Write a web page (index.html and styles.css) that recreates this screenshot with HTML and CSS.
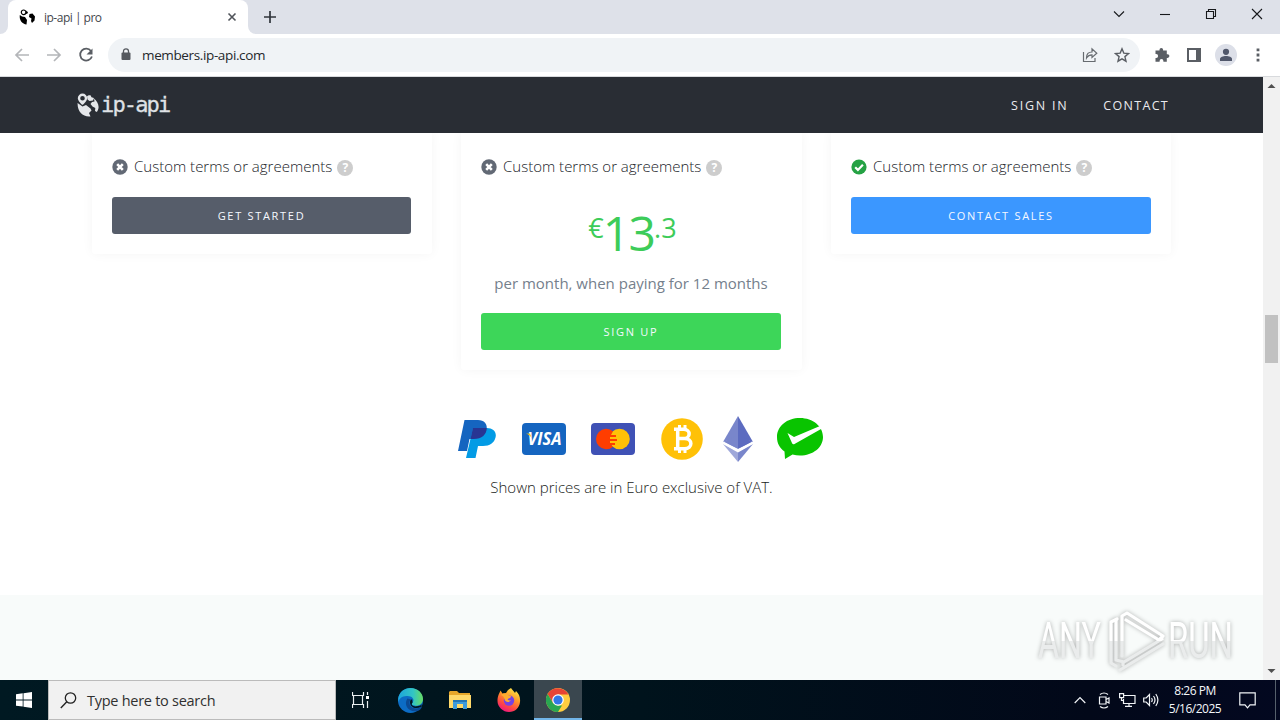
FILE: index.html
```html
<!DOCTYPE html>
<html lang="en">
<head>
<meta charset="utf-8">
<title>ip-api | pro</title>
<link rel="stylesheet" href="styles.css">
</head>
<body>
<svg width="0" height="0" class="defs">
  <symbol id="globe" viewBox="0 0 22 24">
    <path d="M10 3.500c.5-1 2-1.500 3.500-1.300l1 2 2.500.8-1 2.500-3.500.5-2-1.500z"/>
    <path d="M17 5.500c2.500 2 4.500 5 4.600 8.500-.1 2-.8 3.800-1.800 5l-1.800-1 .3-3-2.800-1.500-2-2.500 1.500-2 2.500-.5z"/>
    <path d="M.6 10 5.500 13.500l3.500-1.500 4.500 3.500 1 2-2.500 2.500 1.500 3.500C6 24.300.2 19 .6 10z"/>
    <path fill-rule="evenodd" d="M5.500.5A4.700 4.700 0 0 0 .8 5.200C.8 8 5.500 12 5.500 12s4.700-4 4.700-6.800A4.700 4.700 0 0 0 5.500.5zm0 2.400a2.300 2.300 0 1 1 0 4.600 2.300 2.300 0 0 1 0-4.600z"/>
  </symbol>
  <symbol id="globe-small" viewBox="0 0 17 16">
    <circle cx="4.600" cy="3.300" r="2.300" fill="none" stroke="#000" stroke-width="1.200"/>
    <path d="M7.500 1.500 9 3.500 8 5l-1.500-.5zM.8 6 3 7.500l3 .5 2 3-.5 4.500C3.500 15 0 11.500.8 6zM10.500 5l3-.5 2.500 3-.5 4-2.500 2.500-1-2 .5-2.500-2.500-1.500z"/>
  </symbol>
  <symbol id="cross" viewBox="0 0 16 16"><circle cx="8" cy="8" r="7.700" fill="#626975"/><path d="m5.200 5.200 5.600 5.600m0-5.600-5.600 5.600" stroke="#fff" stroke-width="2.600"/></symbol>
  <symbol id="check" viewBox="0 0 16 16"><circle cx="8" cy="8" r="7.600" fill="#25a244"/><path d="m4.200 8.200 2.700 2.700 5-5.200" fill="none" stroke="#fff" stroke-width="2.200"/></symbol>
</svg>

<header class="tabstrip">
  <div class="edge"></div>
  <div class="tab">
    <svg class="favicon" width="17" height="16"><use href="#globe-small"/></svg>
    <span class="tab-title">ip-api | pro</span>
    <svg class="tab-close" width="10" height="10" viewBox="0 0 10 10"><path d="m1.500 1.500 7 7m0-7-7 7" stroke="#50545a" stroke-width="1.600"/></svg>
  </div>
  <div class="newtab"><svg width="14" height="14" viewBox="0 0 14 14"><path d="M7 1v12M1 7h12" stroke="#30343b" stroke-width="1.700"/></svg></div>
  <div class="winctl">
    <svg width="12" height="12" viewBox="0 0 12 12"><path d="m1 3.500 5 5 5-5"/></svg>
    <svg width="12" height="12" viewBox="0 0 12 12"><path d="M1 6.500h10"/></svg>
    <svg width="12" height="12" viewBox="0 0 12 12"><path d="M1.500 3.500h7v7h-7zM3.500 3.500v-2h7v7h-2"/></svg>
    <svg width="12" height="12" viewBox="0 0 12 12"><path d="m1 1 10 10M11 1 1 11"/></svg>
  </div>
</header>

<div class="toolbar">
  <div class="navbtns">
    <svg width="16" height="16" viewBox="0 0 16 16"><path d="M15 8H2m6-6L2 8l6 6" fill="none" stroke="#b4b6b9" stroke-width="1.700"/></svg>
    <svg width="16" height="16" viewBox="0 0 16 16"><path d="M1 8h13M8 2l6 6-6 6" fill="none" stroke="#b4b6b9" stroke-width="1.700"/></svg>
    <svg width="16" height="16" viewBox="0 0 16 16"><path d="M13 4A6 6 0 1 0 13.900 9.500" fill="none" stroke="#5a5e64" stroke-width="1.800"/><path d="M14.500 1.500v6H8.500z" fill="#5a5e64"/></svg>
  </div>
  <div class="omnibox">
    <svg width="10" height="13" viewBox="0 0 10 13"><rect x=".5" y="4.500" width="9" height="7.500" rx="1" fill="#55595f"/><path d="M2.500 5V3.300a2.500 2.500 0 0 1 5 0V5" fill="none" stroke="#55595f" stroke-width="1.300"/></svg>
    <span class="url">members.ip-api.com</span>
    <svg class="share" width="16" height="16" viewBox="0 0 16 16"><path d="M1.500 5v9.500H13V11M4.500 11C4.500 7 6.500 5 10 5V1.800L14.800 6.300 10 10.500V7.800C7.500 7.800 6 8.500 4.500 11z" fill="none" stroke="#676b70" stroke-width="1.200"/></svg>
    <svg class="star" width="16" height="16" viewBox="0 0 16 16"><path d="m8 1.800 1.800 4.300 4.700.4-3.600 3.100 1.100 4.600L8 11.800l-4 2.400 1.100-4.600-3.600-3.100 4.700-.4z" fill="none" stroke="#5a5e64" stroke-width="1.400"/></svg>
  </div>
  <div class="actions">
    <svg width="16" height="16" viewBox="0 0 16 16"><path fill="#5a5e64" d="M1.500 3.500h4V2.800a1.800 1.800 0 0 1 3.600 0v.7h3.700v3.800h.8a1.800 1.800 0 0 1 0 3.600h-.8v3.800H9.400V14a1.800 1.800 0 0 0-3.800 0v.7H1.500v-3.800h.7a1.900 1.900 0 0 0 0-3.800h-.7z"/></svg>
    <svg width="16" height="16" viewBox="0 0 16 16"><path fill="#5a5e64" fill-rule="evenodd" d="M1 1h14v14H1zm2 2v10h7V3z"/></svg>
    <svg width="22" height="22" viewBox="0 0 22 22"><circle cx="11" cy="11" r="11" fill="#dcdfe8"/><circle cx="11" cy="7.800" r="3.100" fill="#50576b"/><path d="M5 17v-2c0-2 3-3 6-3s6 1 6 3v2z" fill="#50576b"/></svg>
    <svg width="4" height="16" viewBox="0 0 4 16"><path fill="#5a5e64" d="M.6 1.500h2.800v2.800H.6zM.6 6.600h2.800v2.800H.6zM.6 11.700h2.800v2.800H.6z"/></svg>
  </div>
</div>

<div class="viewport">
  <main class="page">
    <nav class="sitenav">
      <svg class="logo" width="22" height="24"><use href="#globe"/></svg>
      <span class="brand">ip-api</span>
      <a class="signin">SIGN IN</a>
      <a class="contact">CONTACT</a>
    </nav>
    <section class="plans">
      <article class="card">
        <div class="feature"><svg width="16" height="16"><use href="#cross"/></svg><span>Custom terms or agreements</span><i class="help">?</i></div>
        <a class="btn dark"><span>GET STARTED</span></a>
      </article>
      <article class="card">
        <div class="feature"><svg width="16" height="16"><use href="#cross"/></svg><span>Custom terms or agreements</span><i class="help">?</i></div>
        <div class="price"><span class="small">€</span><span class="big">13</span><span class="small">.3</span></div>
        <p class="period">per month, when paying for 12 months</p>
        <a class="btn green"><span>SIGN UP</span></a>
      </article>
      <article class="card">
        <div class="feature"><svg width="16" height="16"><use href="#check"/></svg><span>Custom terms or agreements</span><i class="help">?</i></div>
        <a class="btn blue"><span>CONTACT SALES</span></a>
      </article>
    </section>
    <section class="payments">
      <svg class="pp" width="38" height="38" viewBox="0 0 38 38"><path fill="#1565c0" d="M6.500 0H20c6 0 10 4 8.500 10-1.500 6-6 9-13 9h-4L9 31H0z"/><path fill="#039be5" d="M15 8h14c6 0 10 4 8.500 9.500C36 23 32 26 25 26h-5l-2.500 12H8z"/><path fill="#283593" d="M15 8h13.800c-.2 6.500-5 11-13 11h-3.300z"/></svg>
      <svg class="visa" width="44" height="32" viewBox="0 0 44 32"><rect width="44" height="32" rx="4" fill="#1565c0"/><text x="5.500" y="22" textLength="34" lengthAdjust="spacingAndGlyphs" class="visa-text">VISA</text><path d="m4 10.500 4 .3 1.500 4C8 12.500 6.500 11.500 4 10.500z" fill="#ffc107"/></svg>
      <svg class="mc" width="44" height="32" viewBox="0 0 44 32"><rect width="44" height="32" rx="4" fill="#3f51b5"/><circle cx="28.500" cy="16" r="10.300" fill="#ffc107"/><path fill="#ff3d00" d="M22 8.200A10.300 10.300 0 1 0 22 23.800l-2-1.800h4v-2h-5v-2h7v-2h-7v-2h6v-2h-5z"/></svg>
      <svg class="btc" width="42" height="42" viewBox="0 0 42 42"><circle cx="21" cy="21" r="20.800" fill="#ffc107"/><path d="M13 11.300h9.500c7.500 0 7.500 9.200 0 9.200H17m-4 10.200h10.500c8.500 0 8.500-10.200 0-10.200M16.700 11v20" fill="none" stroke="#fff" stroke-width="3.500"/><path d="M18.500 7v5m5.500-5v5m-5.500 18v5m5.500-5v5" stroke="#fff" stroke-width="3"/></svg>
      <svg class="eth" width="30" height="46" viewBox="0 0 30 46"><path fill="#7986cb" d="M15 0 0 26l15-5z"/><path fill="#5c6bc0" d="m15 0 15 26-15-5z"/><path fill="#7986cb" d="m0 26 15-7v14z"/><path fill="#5c6bc0" d="m30 26-15-7v14z"/><path fill="#9fa8da" d="m0 28 15 8.500V46z"/><path fill="#7986cb" d="m30 28-15 8.500V46z"/><path fill="none" stroke="#fff" stroke-width="2" d="m0 26.500 15 8 15-8"/></svg>
      <svg class="wechat" width="47" height="42" viewBox="0 0 47 42"><path fill="#09c400" d="M23 0C10 0 0 8 0 19c0 7 3 11 7.500 14.500L8 41l7.500-4.500c2.500.7 5 1 7.500 1 13 0 23-8 23-18.500S36 0 23 0z"/><path fill="#fff" d="m10.500 15 6.500 4L43 8l1.500 2.800L17.500 26c-1 .5-2 .2-2.400-.7z"/></svg>
    </section>
    <p class="vat"><span>Shown prices are in Euro exclusive of VAT.</span></p>
    <footer class="band"></footer>
    <svg class="watermark" width="226" height="72" viewBox="0 0 226 72">
      <defs><linearGradient id="wm" gradientUnits="userSpaceOnUse" x1="0" y1="0" x2="0" y2="72"><stop offset=".49" stop-color="#fff"/><stop offset=".49" stop-color="#eaecec"/></linearGradient></defs>
      <text x="3" y="52" textLength="63" lengthAdjust="spacingAndGlyphs">ANY</text>
      <g fill="none" stroke="url(#wm)" stroke-width="3.200" stroke-linejoin="round" stroke-linecap="round"><path d="M82 13 76 16v41l5 3"/><path d="M87 50V10l5-3 36 23-4 4-33-20M81 14v40l8 2 38-23M85 64l43-26M88 59v-3"/></g>
      <text x="133" y="52" textLength="65" lengthAdjust="spacingAndGlyphs">RUN</text>
    </svg>
  </main>
  <aside class="scrollbar">
    <svg width="9" height="6" viewBox="0 0 9 6"><path d="m.5 5 4-4 4 4z" fill="#505050"/></svg>
    <div class="thumb"></div>
    <svg class="down" width="9" height="6" viewBox="0 0 9 6"><path d="m.5 1 4 4 4-4z" fill="#505050"/></svg>
  </aside>
</div>

<footer class="taskbar">
  <div class="start"><svg width="16" height="16" viewBox="0 0 16 16"><path fill="#fff" d="M0 2.200 6.700 1.300v6.200H0zM7.500 1.200 16 0v7.500H7.500zM0 8.400h6.700v6.200L0 13.700zM7.500 8.400H16V16l-8.500-1.200z"/></svg></div>
  <div class="search"><svg width="17" height="17" viewBox="0 0 17 17"><circle cx="10.500" cy="6" r="5.200" fill="none" stroke="#222" stroke-width="1.300"/><path d="M6.800 9.800.8 16" stroke="#222" stroke-width="1.400"/></svg><span>Type here to search</span></div>
  <div class="app"><svg width="17" height="16" viewBox="0 0 17 16"><path d="M.5 0v3.500h11V0M.5 16v-3.500h11V16M1.500 3.500v9m9-9v9M15.500 0v3m0 6v7" fill="none" stroke="#e9eef0" stroke-width="1.200"/><path fill="#fff" d="M14 4h3v3h-3z"/></svg></div>
  <div class="app"><svg width="25" height="25" viewBox="0 0 24 24">
    <defs><linearGradient id="eg"><stop stop-color="#1ca5dc"/><stop offset=".6" stop-color="#32c5c4"/><stop offset="1" stop-color="#68dc62"/></linearGradient></defs>
    <circle cx="12" cy="12" r="12" fill="#0c6cc5"/><path d="M.2 10C1 4 6 0 12 0c7 0 12 5 12 10.500 0 4-3 6.500-7 6.500-3 0-4.500-1-3-3 3-4-2-7-6-6.300C4 8 1 10 .2 14z" fill="url(#eg)"/><path d="M9 10c-4 6 1 14 10 12 2-.6 3.500-2.500 4-4-5 3-12 2-12-4 0-1.500.7-2.300 1.700-3z" fill="#0b4a94"/><path d="M14 14c-2 2-.2 4 4 3.600 2-.2 4-.9 5-2l-.8 2.500C17 21 11 18.500 11.600 13c.2-1.500 1-2 2-2z" fill="#02161f"/></svg></div>
  <div class="app"><svg width="22" height="20" viewBox="0 0 22 20"><path fill="#e7a72a" d="M0 2 1 1h7l2 2h11v5H0z"/><path fill="#ffd96a" d="M0 5h22v13H0z"/><path fill="#3e9bdc" d="M4 10h14v9h-4v-5H8v5H4z"/><path fill="#2375b6" d="M4 10h14v2H4z"/></svg></div>
  <div class="app"><svg width="24" height="24" viewBox="0 0 24 24">
    <defs><linearGradient id="ff" x1=".8" y1="0" x2=".3" y2="1"><stop stop-color="#fff04c"/><stop offset=".4" stop-color="#ff9a29"/><stop offset=".72" stop-color="#ff4a42"/><stop offset="1" stop-color="#ee1483"/></linearGradient></defs>
    <path fill="url(#ff)" d="M14 0c1 2 3 3 4 5l1-2c3 3 4.500 6 4 11-.6 6-5 10-11 10S.5 19 .5 13C.5 8 2 6 3.500 2.500l2 3L9 5l2-3z"/><circle cx="12" cy="12.500" r="5.200" fill="#7542e5"/><path fill="#ffac2f" d="M4 7c2-2 5-2 7 0l3 1c0 2-2 2-3 3s1 2 3 1c-2 3-5 2-6 .5C7 10 7 8 4 7z"/></svg></div>
  <div class="app active"><svg width="24" height="24" viewBox="0 0 24 24"><circle cx="12" cy="12" r="12" fill="#ffcd40"/><path fill="#e84435" d="M1.600 6A12 12 0 0 1 22.400 6.500H12L7 15z"/><path fill="#29a651" d="M1.600 6 7 15l5 2.500h4L12 24A12 12 0 0 1 1.600 6z"/><circle cx="12" cy="12" r="5.800" fill="#fff"/><circle cx="12" cy="12" r="4.600" fill="#3277e6"/></svg></div>
  <div class="tray">
    <svg width="12" height="8" viewBox="0 0 12 8"><path d="m.7 7 5.300-5.500L11.300 7"/></svg>
    <svg width="12" height="17" viewBox="0 0 12 17"><path d="M1.500 5h6.500v7H1.500zM8 7.500l3-1.500v5L8 9.500M2 2.500q4-3 8 0M2 14.500q4 3 8 0"/></svg>
    <svg width="17" height="14" viewBox="0 0 17 14"><path d="M5 2.500h11v8H4.500V6M.6.6h4v4h-4zM2.500 4.500v3h2M10 10.500v3M6 13.400h7"/></svg>
    <svg width="17" height="14" viewBox="0 0 17 14"><path d="M.7 5h2.500L6.500 1.500v11L3.200 9H.7zM8.500 5q1.500 2 0 4m2-6q3 4 0 8m2.300-10q4.200 6 0 12"/></svg>
    <div class="clock"><span class="time">8:26 PM</span><span class="date">5/16/2025</span></div>
    <svg class="note" width="17" height="17" viewBox="0 0 17 17"><path d="M.8.8h15.400v12H11l-2.500 3-2.500-3H.8z"/></svg>
    <div class="peek"></div>
  </div>
</footer>
</body>
</html>
```
FILE: styles.css
```css
* { box-sizing: border-box; }
body { margin: 0; width: 1280px; height: 720px; overflow: hidden; display: flex; flex-direction: column; background: #fff; font-family: "Open Sans", "Noto Sans", sans-serif; }
svg { display: block; flex: none; }
span, a { white-space: nowrap; }
.defs { position: absolute; }

.tabstrip { height: 34px; flex: none; display: flex; background: #dee1e9; }
.edge { width: 8px; background: #fff; }
.edge::before { content: ""; display: block; height: 34px; background: #dee1e9; border-bottom-right-radius: 8px; }
.tab { width: 240px; display: flex; align-items: center; padding: 0 11px 0 11px; background: #fff; border-radius: 8px 8px 0 0; }
.favicon { fill: #000; }
.tab-title { margin-left: 8px; font-size: 12px; letter-spacing: -.5px; color: #44474c; }
.tab-close { margin-left: auto; }
.newtab { width: 100px; background: #fff; }
.newtab svg { box-sizing: content-box; padding: 10px 71px 10px 15px; background: #dee1e9; border-bottom-left-radius: 8px; }
.winctl { margin-left: auto; padding: 8px 17px 0 0; display: flex; gap: 34px; }
.winctl path { fill: none; stroke: #16181b; stroke-width: 1.100; }

.toolbar { height: 43px; flex: none; display: flex; align-items: center; padding: 0 20px 1px 14px; border-bottom: 1px solid #d8dadd; }
.navbtns { display: flex; gap: 16px; }
.omnibox { width: 1032px; height: 34px; margin-left: 14px; padding: 0 10px 0 13px; display: flex; align-items: center; border-radius: 17px; background: #f0f3f6; }
.url { margin-left: 11px; font-size: 13.500px; letter-spacing: -.37px; color: #25282c; }
.share { margin-left: auto; }
.star { margin-left: 16px; }
.actions { margin-left: 14px; display: flex; align-items: center; gap: 16px; }
.actions svg:nth-child(3) { margin-left: -3px; }
.actions svg:nth-child(4) { margin-left: 3px; }

.viewport { height: 603px; flex: none; display: flex; }
.page { width: 1263px; display: flex; flex-direction: column; position: relative; overflow: hidden; }
.sitenav { height: 56px; flex: none; display: flex; align-items: center; padding: 0 94px 0 77px; background: #292d34; color: #e9eaee; position: relative; z-index: 1; }
.logo { fill: #e4e6e9; }
.brand { margin-left: 2px; font: 22px/30px "DejaVu Sans Mono", monospace; letter-spacing: -1.850px; color: #dfe1e5; -webkit-text-stroke: .3px #dfe1e5; }
.signin, .contact { font-size: 12.500px; letter-spacing: 1.300px; }
.signin { margin-left: auto; letter-spacing: 1.750px; }
.contact { margin-left: 35px; }

.plans { height: 239px; flex: none; display: grid; grid-template-columns: 340px 341px 340px; column-gap: 29px; padding-left: 92px; align-items: start; }
.card { padding: 22px 20px 20px; margin-top: -1px; background: #fff; box-shadow: 0 0 12px rgba(0, 0, 0, .045); border-radius: 0 0 3px 3px; }
.card:nth-child(1) { padding-right: 21px; }
.card:nth-child(2) { padding-right: 21px; }
.feature { height: 24px; display: flex; align-items: center; font-size: 15px; font-weight: 300; color: #202328; }
.feature span { margin-left: 6px; }
.feature svg { margin-top: 1px; }
.help { width: 16px; height: 16px; margin: 3px 0 0 5px; border-radius: 50%; background: #cdcdcd; color: #fff; font: bold 12px/16px "Open Sans", sans-serif; text-align: center; }
.btn { height: 37px; margin-top: 19px; display: flex; align-items: center; justify-content: center; border-radius: 3px; color: #f5f8ff; font-size: 11px; letter-spacing: 1.700px; }
.dark { background: #565d6a; }
.green { background: #3dd659; }
.blue { background: #3b97ff; }
.price { height: 62px; margin-top: 24px; display: flex; justify-content: center; color: #3dcc59; padding-left: 3px; }
.price .small { font-size: 27px; line-height: 51px; }
.price .big { font-size: 48px; line-height: 61px; letter-spacing: -1.800px; margin-left: -1px; }
.period { margin: 7px 0 0; font-size: 15px; line-height: 24px; text-align: center; color: #75808c; }
.period + .btn { margin-top: 18px; }

.payments { flex: none; display: flex; align-items: center; padding-left: 458px; padding-top: 41px; height: 92px; }
.visa { margin-left: 26px; }
.mc { margin-left: 25px; }
.btc { margin-left: 26px; }
.eth { margin-left: 20px; }
.wechat { margin-left: 24px; }
.visa-text { font: italic bold 17px "Open Sans", sans-serif; fill: #fff; }
.vat { margin: 11px 0 0; font-size: 15px; line-height: 24px; font-weight: 300; text-align: center; color: #191c20; }
.band { margin-top: auto; height: 85px; background: #f8fbfa; }
.watermark { position: absolute; left: 1035px; top: 529px; filter: drop-shadow(0 0 2px rgba(0, 0, 0, .3)); }
.watermark text { font: 50px "Roboto", sans-serif; fill: url(#wm); }

.scrollbar { width: 17px; display: flex; flex-direction: column; align-items: center; padding: 6px 0; background: #f1f1f1; }
.thumb { width: 13px; height: 48px; margin-top: 226px; background: #c1c1c1; }
.down { margin-top: auto; }

.taskbar { height: 40px; flex: none; display: flex; background: linear-gradient(90deg, #001922, #00131c 50%, #020819 85%, #030820); color: #f4f7fa; }
.start { width: 48px; display: flex; align-items: center; justify-content: center; }
.search { width: 288px; display: flex; align-items: center; padding-left: 11px; border: 1px solid #bbb; background: #f1f1f1; color: #303030; font-size: 14.500px; letter-spacing: -.27px; }
.search span { margin-left: 10px; }
.app { width: 49.500px; display: flex; align-items: center; justify-content: center; }
.active { width: 48px; background: #3a474f; border-bottom: 2px solid #72b6e9; padding-top: 2px; }
.tray { margin-left: auto; display: flex; align-items: center; }
.tray path { fill: none; stroke: #f1f4f7; stroke-width: 1.200; }
.tray svg { margin-right: 9px; }
.tray svg:nth-child(1) { margin-right: 12px; }
.tray svg:nth-child(3) { margin-right: 7px; }
.clock { width: 52px; display: flex; flex-direction: column; align-items: center; font-size: 12px; line-height: 18px; letter-spacing: -.5px; }
.tray .note { margin: 0 19px 0 18px; }
.peek { width: 5px; height: 40px; border-left: 1px solid #56606c; }
```
